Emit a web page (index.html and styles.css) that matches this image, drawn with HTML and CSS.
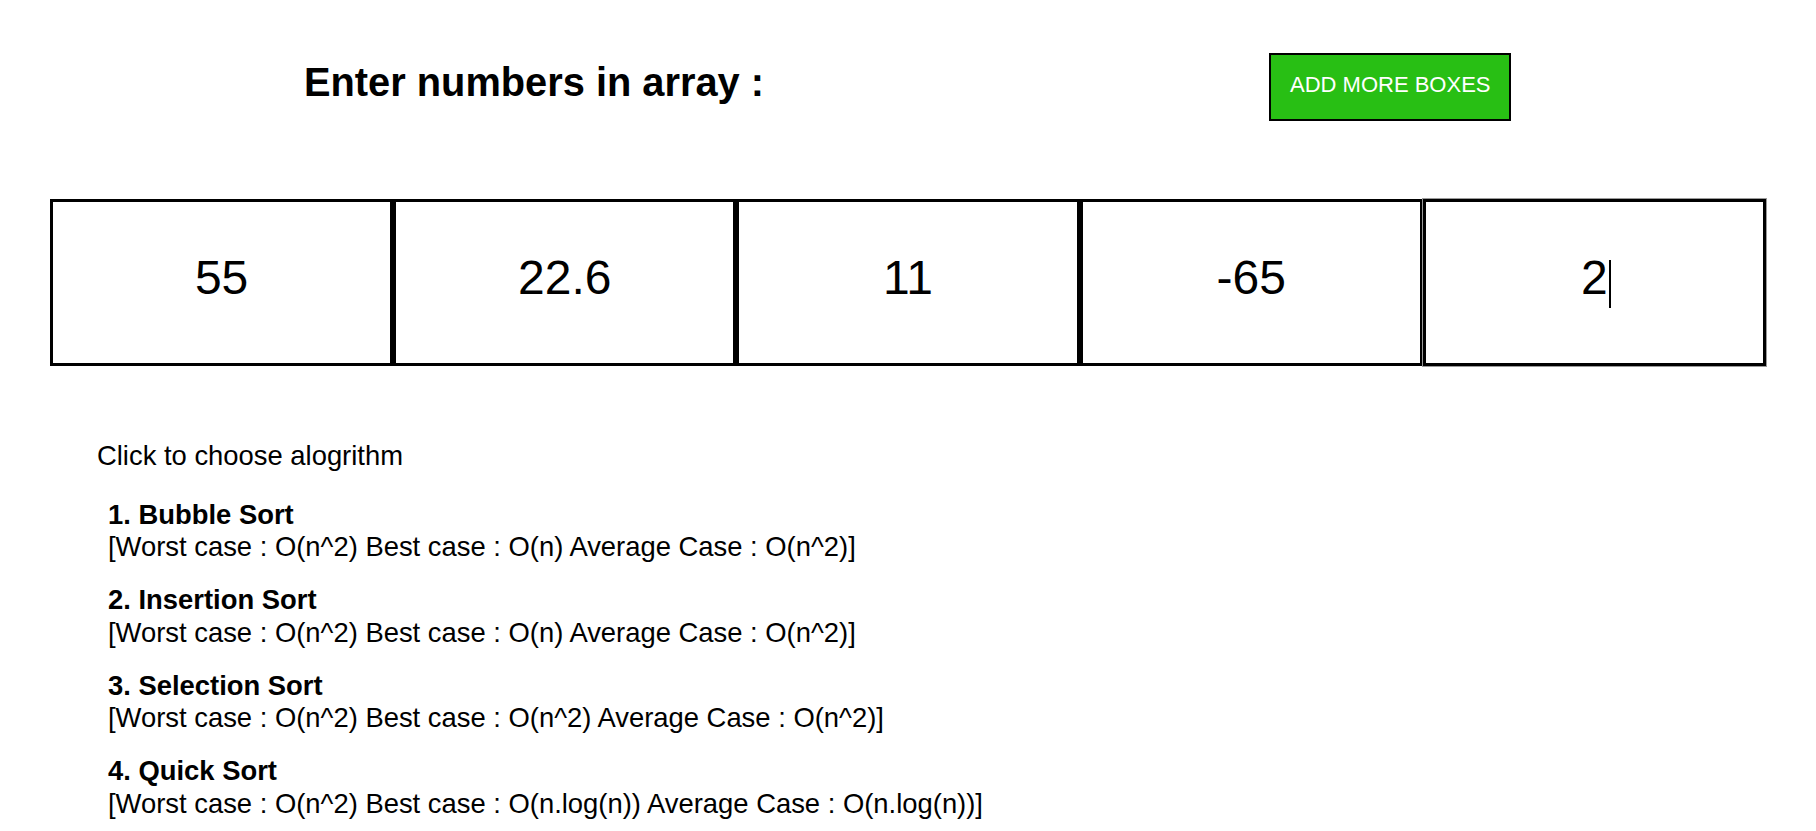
FILE: index.html
```html
<!DOCTYPE html>
<html lang="en">
<head>
<meta charset="utf-8">
<title>Sorting Visualizer</title>
<link rel="stylesheet" href="styles.css">
</head>
<body>
  <header class="top">
    <h1 class="title">Enter numbers in array :</h1>
    <button class="add-btn" type="button">ADD MORE BOXES</button>
  </header>

  <section class="array-row">
    <div class="cell"><span class="val">55</span></div>
    <div class="cell"><span class="val">22.6</span></div>
    <div class="cell"><span class="val">11</span></div>
    <div class="cell"><span class="val">-65</span></div>
    <div class="cell cell-active"><span class="val val-caret">2</span></div>
  </section>

  <section class="algos">
    <p class="choose">Click to choose alogrithm</p>
    <ul class="algo-list">
      <li class="algo">
        <div class="algo-name">1. Bubble Sort</div>
        <div class="algo-cx">[Worst case : O(n^2) Best case : O(n) Average Case : O(n^2)]</div>
      </li>
      <li class="algo">
        <div class="algo-name">2. Insertion Sort</div>
        <div class="algo-cx">[Worst case : O(n^2) Best case : O(n) Average Case : O(n^2)]</div>
      </li>
      <li class="algo">
        <div class="algo-name">3. Selection Sort</div>
        <div class="algo-cx">[Worst case : O(n^2) Best case : O(n^2) Average Case : O(n^2)]</div>
      </li>
      <li class="algo">
        <div class="algo-name">4. Quick Sort</div>
        <div class="algo-cx">[Worst case : O(n^2) Best case : O(n.log(n)) Average Case : O(n.log(n))]</div>
      </li>
    </ul>
  </section>
</body>
</html>
```

FILE: styles.css
```css
html, body {
  margin: 0;
  padding: 0;
  background: #ffffff;
}

body {
  font-family: "Liberation Sans", Arial, Helvetica, sans-serif;
  color: #000000;
  overflow: hidden;
}

.top {
  display: flex;
  align-items: flex-start;
  padding: 53px 0 0 304px;
}

.title {
  margin: 7px 0 0 0;
  width: 965px;
  font-size: 39.8px;
  font-weight: bold;
  line-height: normal;
}

.add-btn {
  font-family: "Liberation Sans", Arial, Helvetica, sans-serif;
  font-size: 22px;
  line-height: normal;
  color: #ffffff;
  background: #28bf14;
  border: 2px solid #000000;
  border-radius: 0;
  padding: 17px 19px 21px;
  margin: 0;
  cursor: pointer;
}

.array-row {
  display: flex;
  margin: 78px 50px 0 50px;
}

.cell {
  flex: 1 1 0;
  height: 167px;
  box-sizing: border-box;
  border: 3px solid #000000;
  display: flex;
  align-items: center;
  justify-content: center;
  padding-bottom: 10px;
  font-size: 48px;
}

.cell-active {
  outline: 1px solid #9a9a9a;
}

.val {
  display: inline-block;
  line-height: 1;
}

.val-caret {
  position: relative;
}

.val-caret::after {
  content: "";
  position: absolute;
  left: calc(100% + 1px);
  top: 6px;
  width: 2px;
  height: 48px;
  background: #000000;
}

.algos {
  padding: 0 0 0 97px;
  margin-top: 74px;
  font-size: 27.4px;
  line-height: 32.5px;
}

.choose {
  margin: 0;
}

.algo-list {
  list-style: none;
  margin: 26px 0 0 11px;
  padding: 0;
  display: flex;
  flex-direction: column;
  gap: 20.5px;
}

.algo-name {
  font-weight: bold;
}
```
